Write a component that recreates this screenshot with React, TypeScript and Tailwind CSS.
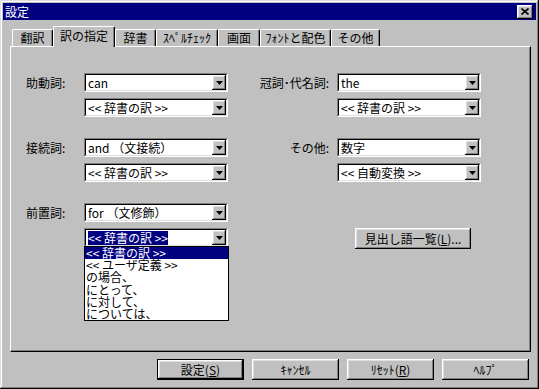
import React from 'react';

const raised =
  'shadow-[inset_-1px_-1px_#000,inset_1px_1px_#fff,inset_-2px_-2px_#808080,inset_2px_2px_#dfdfdf]';

const listItems = ['<< 辞書の訳 >>', '<< ユーザ定義 >>', 'の場合、', 'にとって、', 'に対して、', 'については、'];

const Arrow = () => (
  <svg width="7" height="4" viewBox="0 0 7 4">
    <polygon points="0,0 7,0 3.5,4" fill="#000" />
  </svg>
);

const Combo = ({ value, focused, open }: { value: string; focused?: boolean; open?: boolean }) => (
  <div className="relative w-[144px] h-[19px] border border-t-[#808080] border-l-[#808080] border-b-white border-r-white">
    <div className="flex h-full border border-t-black border-l-black border-b-[#dfdfdf] border-r-[#dfdfdf] bg-white">
      <div className="flex-1 flex items-center pl-[2px] text-[12px] leading-none whitespace-nowrap overflow-hidden">
        <span className={focused ? 'bg-[#000080] text-white py-[1px]' : ''}>{value}</span>
      </div>
      <div className={`w-[14px] h-full flex items-center justify-center bg-[#c0c0c0] ${raised}`}>
        <Arrow />
      </div>
    </div>
    {open && (
      <div className="absolute left-[-1px] top-full z-20 w-[145px] h-[75px] border border-black bg-white text-[12px] leading-[12px]">
        {listItems.map((t, i) => (
          <div
            key={t}
            className={`h-[12.2px] pl-[1px] whitespace-nowrap ${i === 0 ? 'bg-[#000080] text-white' : ''}`}
          >
            {t}
          </div>
        ))}
      </div>
    )}
  </div>
);

const LeftGroup = ({ label, first, second, open }: { label: string; first: string; second: string; open?: boolean }) => (
  <div className="flex flex-col gap-[6px]">
    <div className="flex items-center">
      <div className="w-[58px] text-[12px] leading-none">{label}</div>
      <Combo value={first} />
    </div>
    <div className="pl-[58px]">
      <Combo value={second} focused={open} open={open} />
    </div>
  </div>
);

const RightGroup = ({ label, first, second }: { label: string; first: string; second: string }) => (
  <div className="flex flex-col gap-[6px]">
    <div className="flex items-center">
      <div className="w-[109px] pr-[8px] text-right text-[12px] leading-none">{label}</div>
      <Combo value={first} />
    </div>
    <div className="pl-[109px]">
      <Combo value={second} />
    </div>
  </div>
);

const tabs = [
  { name: '翻訳', w: 'w-[41px]' },
  { name: '訳の指定', w: 'w-[62px]', active: true },
  { name: '辞書', w: 'w-[41px]' },
  { name: 'ｽﾍﾟﾙﾁｪｯｸ', w: 'w-[62px]' },
  { name: '画面', w: 'w-[42px]' },
  { name: 'ﾌｫﾝﾄと配色', w: 'w-[71px]' },
  { name: 'その他', w: 'w-[49px]' },
];

const Btn = ({ children, isDefault }: { children: React.ReactNode; isDefault?: boolean }) =>
  isDefault ? (
    <div className="w-[87px] h-[21px] border border-black">
      <div className={`w-full h-full flex items-center justify-center text-[12px] leading-none ${raised}`}>
        {children}
      </div>
    </div>
  ) : (
    <div className={`w-[87px] h-[21px] flex items-center justify-center text-[12px] leading-none ${raised}`}>
      {children}
    </div>
  );

export default function App() {
  return (
    <div
      className="w-[539px] h-[389px] bg-[#c0c0c0] p-[3px] flex flex-col text-black font-['Noto_Sans_CJK_JP','Noto_Sans',sans-serif] shadow-[inset_-1px_-1px_#000,inset_1px_1px_#dfdfdf,inset_-2px_-2px_#808080,inset_2px_2px_#fff]"
    >
      {/* title bar */}
      <div className="h-[17px] bg-[#000080] flex items-center justify-between pl-[2px] pr-[3px]">
        <span className="text-white text-[12px] leading-none">設定</span>
        <div className={`w-[16px] h-[14px] bg-[#c0c0c0] flex items-center justify-center ${raised}`}>
          <svg width="8" height="7" viewBox="0 0 8 7">
            <path d="M0.5 0.5 L7.5 6.5 M7.5 0.5 L0.5 6.5" stroke="#000" strokeWidth="1.6" />
          </svg>
        </div>
      </div>

      {/* tabs */}
      <div className="mt-[6px] ml-[7px] pl-[2px] h-[20px] flex items-end">
        {tabs.map(t =>
          t.active ? (
            <div
              key={t.name}
              className={`${t.w} h-[21px] -mb-[1px] relative z-10 bg-[#c0c0c0] border-t border-l border-r border-t-white border-l-white border-r-black rounded-t-[2px] shadow-[inset_-1px_0_#808080] flex items-start pt-[3px] justify-center text-[12px] leading-none`}
            >
              {t.name}
            </div>
          ) : (
            <div
              key={t.name}
              className={`${t.w} h-[17px] border-t border-l border-r border-t-white border-l-white border-r-black rounded-t-[2px] shadow-[inset_-1px_0_#808080] flex items-center justify-center text-[12px] leading-none`}
            >
              {t.name}
            </div>
          ),
        )}
      </div>

      {/* panel */}
      <div className="ml-[7px] w-[521px] h-[306px] border border-t-white border-l-white border-r-black border-b-black shadow-[inset_-1px_-1px_#808080] pt-[26px] pl-[15px] flex">
        <div className="w-[202px] flex flex-col gap-[21px]">
          <LeftGroup label="助動詞:" first="can" second="<< 辞書の訳 >>" />
          <LeftGroup label="接続詞:" first="and （文接続）" second="<< 辞書の訳 >>" />
          <LeftGroup label="前置詞:" first="for （文修飾）" second="<< 辞書の訳 >>" open />
        </div>
        <div className="flex flex-col">
          <div className="flex flex-col gap-[21px]">
            <RightGroup label="冠詞･代名詞:" first="the" second="<< 辞書の訳 >>" />
            <RightGroup label="その他:" first="数字" second="<< 自動変換 >>" />
          </div>
          <div
            className={`mt-[46px] ml-[127px] w-[116px] h-[21px] flex items-center justify-center text-[12px] leading-none ${raised}`}
          >
            見出し語一覧(<span className="underline">L</span>)...
          </div>
        </div>
      </div>

      {/* buttons */}
      <div className="mt-[7px] flex justify-end gap-[8px] pr-[7px]">
        <Btn isDefault>
          設定(<span className="underline">S</span>)
        </Btn>
        <Btn>ｷｬﾝｾﾙ</Btn>
        <Btn>
          ﾘｾｯﾄ(<span className="underline">R</span>)
        </Btn>
        <Btn>ﾍﾙﾌﾟ</Btn>
      </div>
    </div>
  );
}
